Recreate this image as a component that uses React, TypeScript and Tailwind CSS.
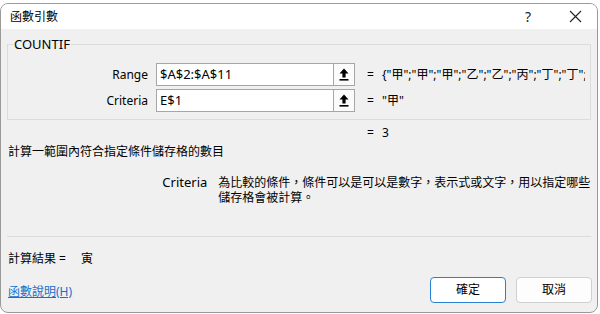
import React from 'react';

const RefButton = () => (
  <div className="w-[21px] h-full border border-l-0 border-[#a6a6a6] bg-[#fbfbfb] flex items-center justify-center">
    <svg width="10" height="13" viewBox="0 0 10 13">
      <path d="M5 0.5 L9.5 5.5 H6.6 V9.5 H3.4 V5.5 H0.5 Z" fill="#000" />
      <rect x="0.5" y="11" width="9" height="1.6" fill="#000" />
    </svg>
  </div>
);

const ArgRow = ({ label, value, result }: { label: string; value: string; result: string }) => (
  <div className="flex items-center h-[23px]">
    <div className="w-[140px] text-right pr-[4px]">{label}</div>
    <div className="ml-[4px] flex h-full">
      <div className="w-[178px] h-full border border-[#a6a6a6] bg-white flex items-center px-[3px] text-[13px]">
        {value}
      </div>
      <RefButton />
    </div>
    <div className="ml-[12px] w-[10px]">=</div>
    <div className="ml-[5px] w-[203px] whitespace-nowrap overflow-hidden">{result}</div>
  </div>
);

const App = () => {
  return (
    <div
      className="w-[600px] h-[314px] bg-white pt-[3px] overflow-hidden text-[12px] text-black"
      style={{ fontFamily: '"Noto Sans", "Noto Sans CJK TC", sans-serif' }}
    >
      <div className="w-[598px] h-[310px] border border-[#9a9a9a] rounded-[8px] bg-[#f0f0f0] overflow-hidden flex flex-col">
        <div className="h-[25px] shrink-0 bg-white flex items-center pl-[9px] pr-[12px]">
          <span className="text-[12px]">函數引數</span>
          <span className="ml-auto mr-[38px] text-[14px] text-[#222]">?</span>
          <svg width="13" height="13" viewBox="0 0 13 13" className="mr-[3px]">
            <path d="M1 1 L12 12 M12 1 L1 12" stroke="#222" strokeWidth="1.1" />
          </svg>
        </div>

        <div className="px-[6px] flex-1 flex flex-col">
          <fieldset className="mt-[8px] border border-[#dcdcdc] px-[4px] pb-[7px]">
            <legend className="ml-[1px] px-[1px] text-[13px] leading-[14px]">COUNTIF</legend>
            <div className="mt-[12px] flex flex-col gap-[3px]">
              <ArgRow label="Range" value="$A$2:$A$11" result={'{"甲";"甲";"甲";"乙";"乙";"丙";"丁";"丁";"丁";"丁"}'} />
              <ArgRow label="Criteria" value="E$1" result={'"甲"'} />
            </div>
          </fieldset>

          <div className="flex mt-[4px] h-[18px] items-center">
            <div className="w-[360px]" />
            <div className="w-[10px]">=</div>
            <div className="ml-[5px]">3</div>
          </div>

          <div className="mt-[1px] h-[18px] flex items-center pl-[1px]">計算一範圍內符合指定條件儲存格的數目</div>

          <div className="mt-[14px] flex leading-[15px]">
            <div className="w-[202px] text-right pr-[1px] text-[13px]">Criteria</div>
            <div className="ml-[10px] w-[374px]">
              為比較的條件，條件可以是可以是數字，表示式或文字，用以指定哪些儲存格會被計算。
            </div>
          </div>

          <div className="mt-[31px] border-t border-[#dcdcdc]" />

          <div className="mt-[13px] h-[18px] flex items-center pl-[1px]">
            <span>計算結果 =</span>
            <span className="ml-[15px]">寅</span>
          </div>

          <div className="mt-[9px] flex items-center">
            <a href="#" className="text-[#1a6fc9] underline pl-[1px] mt-[3px]">函數說明(H)</a>
            <div className="ml-auto flex gap-[10px] mr-[-1px]">
              <button className="w-[76px] h-[26px] rounded-[4px] border border-[#2b7fd2] bg-white text-[12px]">
                確定
              </button>
              <button className="w-[76px] h-[26px] rounded-[4px] border border-[#d0d0d0] bg-[#fdfdfd] text-[12px]">
                取消
              </button>
            </div>
          </div>
        </div>
      </div>
    </div>
  );
};

export default App;
